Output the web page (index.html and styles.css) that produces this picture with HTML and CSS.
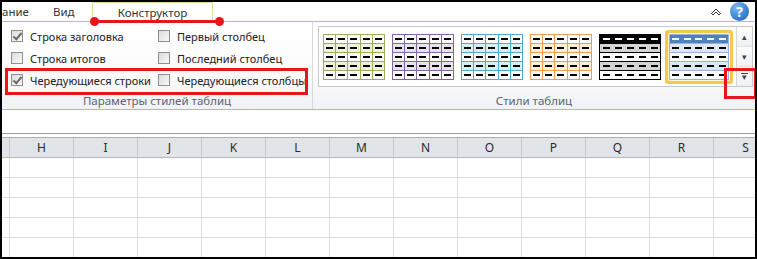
FILE: index.html
```html
<!DOCTYPE html>
<html lang="ru">
<head>
    <meta charset="UTF-8">
    <title>Конструктор таблиц</title>
    <link rel="stylesheet" href="styles.css">
</head>
<body>
    <div class="window">
        <div class="tabs">
            <div class="tab tab-cut">ание</div>
            <div class="tab tab-view">Вид</div>
            <div class="tab tab-active">Конструктор</div>
            <div class="tab-tools">
                <svg class="caret" width="10" height="9" viewBox="0 0 10 9">
                    <path d="M0.5 6.5 L5 2 L9.5 6.5 L8 8 L5 5 L2 8 Z" fill="#fff" stroke="#333" stroke-width="1"/>
                </svg>
                <div class="help">?</div>
            </div>
        </div>

        <div class="ribbon">
            <div class="group group-options">
                <div class="options">
                    <label class="option"><span class="check checked"></span>Строка заголовка</label>
                    <label class="option"><span class="check"></span>Первый столбец</label>
                    <label class="option"><span class="check"></span>Строка итогов</label>
                    <label class="option"><span class="check"></span>Последний столбец</label>
                    <label class="option"><span class="check checked"></span>Чередующиеся строки</label>
                    <label class="option"><span class="check"></span>Чередующиеся столбцы</label>
                </div>
                <div class="group-label">Параметры стилей таблиц</div>
            </div>
            <div class="group group-styles">
                <div class="gallery">
                    <div class="gallery-items">
                        <div class="swatch green"></div>
                        <div class="swatch purple"></div>
                        <div class="swatch aqua"></div>
                        <div class="swatch orange"></div>
                        <div class="swatch plain dark"></div>
                        <div class="swatch plain blue selected"></div>
                    </div>
                    <div class="gallery-scroll">
                        <div class="scroll-btn">&#9652;</div>
                        <div class="scroll-btn">&#9662;</div>
                        <div class="scroll-btn more"><span class="more-bar"></span>&#9662;</div>
                    </div>
                </div>
                <div class="group-label">Стили таблиц</div>
            </div>
        </div>

        <div class="formula"></div>

        <div class="sheet">
            <div class="sheet-row header-row">
                <div class="corner"></div>
                <div class="col">H</div>
                <div class="col">I</div>
                <div class="col">J</div>
                <div class="col">K</div>
                <div class="col">L</div>
                <div class="col">M</div>
                <div class="col">N</div>
                <div class="col">O</div>
                <div class="col">P</div>
                <div class="col">Q</div>
                <div class="col">R</div>
                <div class="col">S</div>
            </div>
            <div class="cells"></div>
        </div>

        <!-- red annotation marks -->
        <div class="mark-line"></div>
        <div class="mark-box mark-rows"></div>
        <div class="mark-box mark-more"></div>
    </div>

    <script>
        // fill each style preview with a 5x5 grid of cells
        document.querySelectorAll('.swatch').forEach(function (swatch) {
            for (let i = 0; i < 25; i++) {
                swatch.appendChild(document.createElement('span'));
            }
        });
    </script>
</body>
</html>
```

FILE: styles.css
```css
* {
    margin: 0;
    padding: 0;
    box-sizing: border-box;
}

body {
    font-family: 'Noto Sans', 'Open Sans', sans-serif;
    background: #fff;
    color: #222;
}

.window {
    position: relative;
    width: 757px;
    height: 259px;
    border: 2px solid #000;
    overflow: hidden;
    background: #fff;
}

/* tabs */

.tabs {
    display: flex;
    height: 19px;
    font-size: 11.5px;
    color: #333;
}

.tab {
    line-height: 19px;
    white-space: nowrap;
}

.tab-cut {
    width: 51px;
}

.tab-view {
    width: 39px;
}

.tab-active {
    width: 121px;
    height: 20px;
    text-align: center;
    border: 1px solid #e2dc9c;
    border-bottom: none;
    background: #fff;
    position: relative;
    z-index: 1;
}

.tab-tools {
    margin-left: auto;
    display: flex;
    align-items: center;
    gap: 9px;
    padding-right: 6px;
}

.caret {
    display: block;
}

.help {
    width: 19px;
    height: 19px;
    border-radius: 50%;
    background: radial-gradient(circle at 35% 30%, #7db8ee 0%, #3a86d4 55%, #2565b0 100%);
    color: #fff;
    font-weight: bold;
    font-size: 14px;
    line-height: 19px;
    text-align: center;
}

/* ribbon */

.ribbon {
    display: flex;
    height: 89px;
    border-top: 1px solid #cdc83c;
    border-bottom: 1px solid #b9c46a;
    background: linear-gradient(#ffffff 0%, #fbfbfc 60%, #f1f2f4 100%);
}

.group {
    display: flex;
    flex-direction: column;
}

.group-options {
    width: 311px;
    border-right: 1px solid #d8d8d8;
}

.group-styles {
    flex: 1;
}

.group-label {
    margin-top: auto;
    height: 15px;
    line-height: 14px;
    font-size: 11.5px;
    text-align: center;
    color: #5d6275;
}

.options {
    display: grid;
    grid-template-columns: 147px 1fr;
    grid-auto-rows: 22px;
    padding: 3px 0 0 9px;
}

.option {
    display: flex;
    align-items: center;
    gap: 7px;
    font-size: 11px;
    white-space: nowrap;
    color: #222;
}

.check {
    width: 12px;
    height: 12px;
    border: 1px solid #8e8f8f;
    background: linear-gradient(135deg, #dcdcdc, #f8f8f8);
    position: relative;
    flex-shrink: 0;
}

.check.checked::after {
    content: "";
    position: absolute;
    left: 3px;
    top: 0;
    width: 3px;
    height: 7px;
    border-right: 2px solid #6a6a6a;
    border-bottom: 2px solid #6a6a6a;
    transform: rotate(40deg);
}

/* style gallery */

.gallery {
    display: flex;
    height: 61px;
    margin: 4px 2px 0 5px;
    border: 1px solid #c9c9c9;
    background: #fff;
}

.gallery-items {
    flex: 1;
    display: flex;
    gap: 7px;
    padding: 7px 0 0 4px;
}

.swatch {
    --line: #9bb05c;
    --tint: #eff2d6;
    --head: #fff;
    --head-dash: #000;
    width: 62px;
    height: 46px;
    display: grid;
    grid-template-columns: repeat(5, 1fr);
    grid-template-rows: repeat(5, 1fr);
    gap: 1px;
    padding: 1px;
    background: var(--line);
}

.swatch span {
    display: flex;
    align-items: center;
    justify-content: center;
    background: #fff;
}

.swatch span::after {
    content: "";
    width: 7px;
    height: 2px;
    background: #000;
}

.swatch span:nth-child(-n+5) {
    background: var(--head);
}

.swatch span:nth-child(-n+5)::after {
    background: var(--head-dash);
}

.swatch span:nth-child(n+6):nth-child(-n+10),
.swatch span:nth-child(n+16):nth-child(-n+20) {
    background: var(--tint);
}

.swatch.purple {
    --line: #8466a6;
    --tint: #e6e2ee;
}

.swatch.aqua {
    --line: #4cacc9;
    --tint: #d9eef4;
}

.swatch.orange {
    --line: #f59b52;
    --tint: #fdf0d6;
}

.swatch.plain {
    column-gap: 0;
}

.swatch.dark {
    --line: #000;
    --tint: #d4d4d4;
    --head: #000;
    --head-dash: #fff;
}

.swatch.blue {
    --line: #94b2da;
    --tint: #dde6f2;
    --head: #4f81bd;
    --head-dash: #fff;
    width: 60px;
    margin-left: 1px;
}

.swatch.selected {
    border-radius: 1px;
    box-shadow: 0 0 0 1px #fff6d0, 0 0 0 4px #f4c84c;
}

.gallery-scroll {
    width: 16px;
    border-left: 1px solid #d6d6d6;
    display: flex;
    flex-direction: column;
}

.scroll-btn {
    flex: 1;
    display: flex;
    flex-direction: column;
    align-items: center;
    justify-content: center;
    font-size: 9px;
    line-height: 8px;
    color: #444;
    background: linear-gradient(#fdfdfd, #eef0f3);
}

.scroll-btn + .scroll-btn {
    border-top: 1px solid #e2e2e2;
}

.more-bar {
    width: 7px;
    height: 1px;
    background: #444;
    margin-bottom: -1px;
}

/* sheet */

.formula {
    height: 24px;
    border-bottom: 1px solid #9e9e9e;
    margin-bottom: 3px;
    background: #fff;
}

.sheet-row {
    display: flex;
}

.header-row {
    height: 21px;
    border-top: 1px solid #abafb6;
    border-bottom: 1px solid #b3b7bd;
    background: #e1e4e9;
    font-size: 12px;
    color: #2c2c2c;
}

.corner {
    width: 8px;
    flex-shrink: 0;
    border-right: 1px solid #c3c6cb;
}

.col {
    width: 64px;
    flex-shrink: 0;
    text-align: center;
    line-height: 19px;
    border-right: 1px solid #c3c6cb;
}

.cells {
    height: 100px;
    background-color: #fff;
    background-image:
        repeating-linear-gradient(to bottom, transparent 0 19px, #dadcdd 19px 20px),
        linear-gradient(to right, transparent 0 7px, #dadcdd 7px 8px, transparent 8px),
        repeating-linear-gradient(to right, transparent 0 63px, #dadcdd 63px 64px);
    background-position: 0 0, 0 0, 8px 0;
    background-repeat: repeat, no-repeat, repeat-x;
}

/* annotations */

.mark-line {
    position: absolute;
    left: 92px;
    top: 18px;
    width: 126px;
    height: 3px;
    background: #e8161b;
    z-index: 5;
}

.mark-line::before,
.mark-line::after {
    content: "";
    position: absolute;
    top: -3px;
    width: 9px;
    height: 9px;
    border-radius: 50%;
    background: #e8161b;
}

.mark-line::before {
    left: -4px;
}

.mark-line::after {
    right: -4px;
}

.mark-box {
    position: absolute;
    border: 3px solid #e8161b;
    z-index: 5;
}

.mark-rows {
    left: 3px;
    top: 66px;
    width: 303px;
    height: 27px;
}

.mark-more {
    left: 722px;
    top: 66px;
    width: 33px;
    height: 31px;
}
```
